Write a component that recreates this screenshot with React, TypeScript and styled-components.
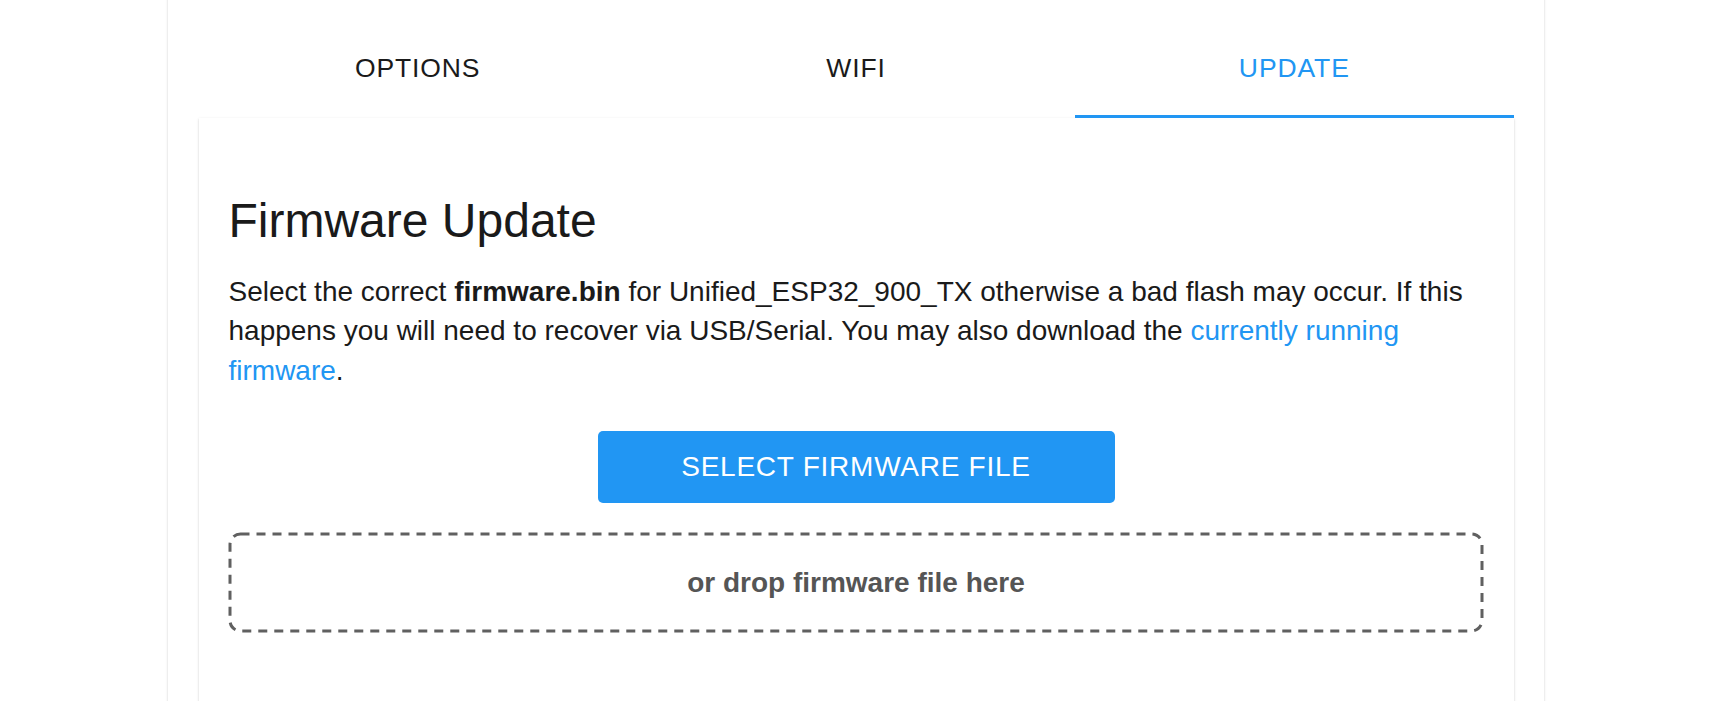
import React, { useState } from "react";
import styled, { createGlobalStyle } from "styled-components";

const GlobalStyle = createGlobalStyle`
  html, body {
    margin: 0;
    padding: 0;
    background: #ffffff;
    font-family: "Liberation Sans", Arial, sans-serif;
    overflow: hidden;
  }
  * { box-sizing: border-box; }
`;

const Page = styled.div`
  display: flex;
  justify-content: center;
  min-height: 701px;
`;

const OuterPaper = styled.div`
  width: 1376px;
  margin-top: -20px;
  padding: 38px 30px 0 31px;
  background: #fff;
  min-height: 760px;
  box-shadow: 0 2px 1px -1px rgba(0, 0, 0, 0.2), 0 1px 1px 0 rgba(0, 0, 0, 0.14),
    0 1px 3px 0 rgba(0, 0, 0, 0.12);
`;

const TabBar = styled.div`
  display: grid;
  grid-template-columns: repeat(3, 1fr);
  height: 100px;
`;

const Tab = styled.button<{ $active?: boolean }>`
  position: relative;
  border: none;
  background: transparent;
  font-family: "Liberation Sans", Arial, sans-serif;
  font-size: 26.5px;
  letter-spacing: 0.9px;
  text-transform: uppercase;
  color: ${(p) => (p.$active ? "#2196f3" : "#1a1a1a")};
  display: flex;
  align-items: center;
  justify-content: center;
  padding: 0;
  cursor: pointer;
  &::after {
    content: "";
    position: absolute;
    left: 0;
    right: 0;
    bottom: 0;
    height: 3px;
    background: ${(p) => (p.$active ? "#2196f3" : "transparent")};
  }
`;

const Card = styled.div`
  background: #fff;
  min-height: 640px;
  padding: 71px 30px 0 30px;
  box-shadow: 0 2px 1px -1px rgba(0, 0, 0, 0.2), 0 1px 1px 0 rgba(0, 0, 0, 0.14),
    0 1px 3px 0 rgba(0, 0, 0, 0.12);
`;

const Heading = styled.h2`
  margin: 0;
  font-size: 48px;
  font-weight: 400;
  line-height: 64px;
  color: #1a1a1a;
`;

const Paragraph = styled.p`
  margin: 19px 0 0 0;
  font-size: 28px;
  line-height: 39.3px;
  color: #1a1a1a;
  b {
    font-weight: 700;
  }
`;

const Link = styled.a`
  color: #2196f3;
  text-decoration: none;
`;

const ButtonRow = styled.div`
  display: flex;
  justify-content: center;
  margin-top: 41px;
`;

const SelectButton = styled.button`
  width: 517px;
  height: 72px;
  border: none;
  border-radius: 5px;
  background: #2196f3;
  color: #fff;
  font-family: "Liberation Sans", Arial, sans-serif;
  font-size: 28px;
  letter-spacing: 0.75px;
  text-transform: uppercase;
  cursor: pointer;
`;

const DropZone = styled.div`
  position: relative;
  margin-top: 30px;
  height: 100px;
  display: flex;
  align-items: center;
  justify-content: center;
  font-size: 28px;
  font-weight: 700;
  color: #555555;
`;

const DashedOutline = styled.svg`
  position: absolute;
  top: 1.5px;
  left: 1.5px;
  width: calc(100% - 3px);
  height: calc(100% - 3px);
  overflow: visible;
  pointer-events: none;
`;

export default function App() {
  const [tab, setTab] = useState(2);
  const tabs = ["Options", "Wifi", "Update"];
  return (
    <>
      <GlobalStyle />
      <Page>
        <OuterPaper>
          <TabBar>
            {tabs.map((t, i) => (
              <Tab key={t} $active={tab === i} onClick={() => setTab(i)}>
                {t}
              </Tab>
            ))}
          </TabBar>
          <Card>
            <Heading>Firmware Update</Heading>
            <Paragraph>
              Select the correct <b>firmware.bin</b> for Unified_ESP32_900_TX
              otherwise a bad flash may occur. If this happens you will need to
              recover via USB/Serial. You may also download the{" "}
              <Link href="#">currently running firmware</Link>.
            </Paragraph>
            <ButtonRow>
              <SelectButton>Select Firmware File</SelectButton>
            </ButtonRow>
            <DropZone>
              <DashedOutline aria-hidden="true">
                <rect
                  x="0"
                  y="0"
                  width="100%"
                  height="100%"
                  rx="10.5"
                  ry="10.5"
                  fill="none"
                  stroke="#606060"
                  strokeWidth="3"
                  strokeDasharray="9 7"
                />
              </DashedOutline>
              or drop firmware file here
            </DropZone>
          </Card>
        </OuterPaper>
      </Page>
    </>
  );
}
